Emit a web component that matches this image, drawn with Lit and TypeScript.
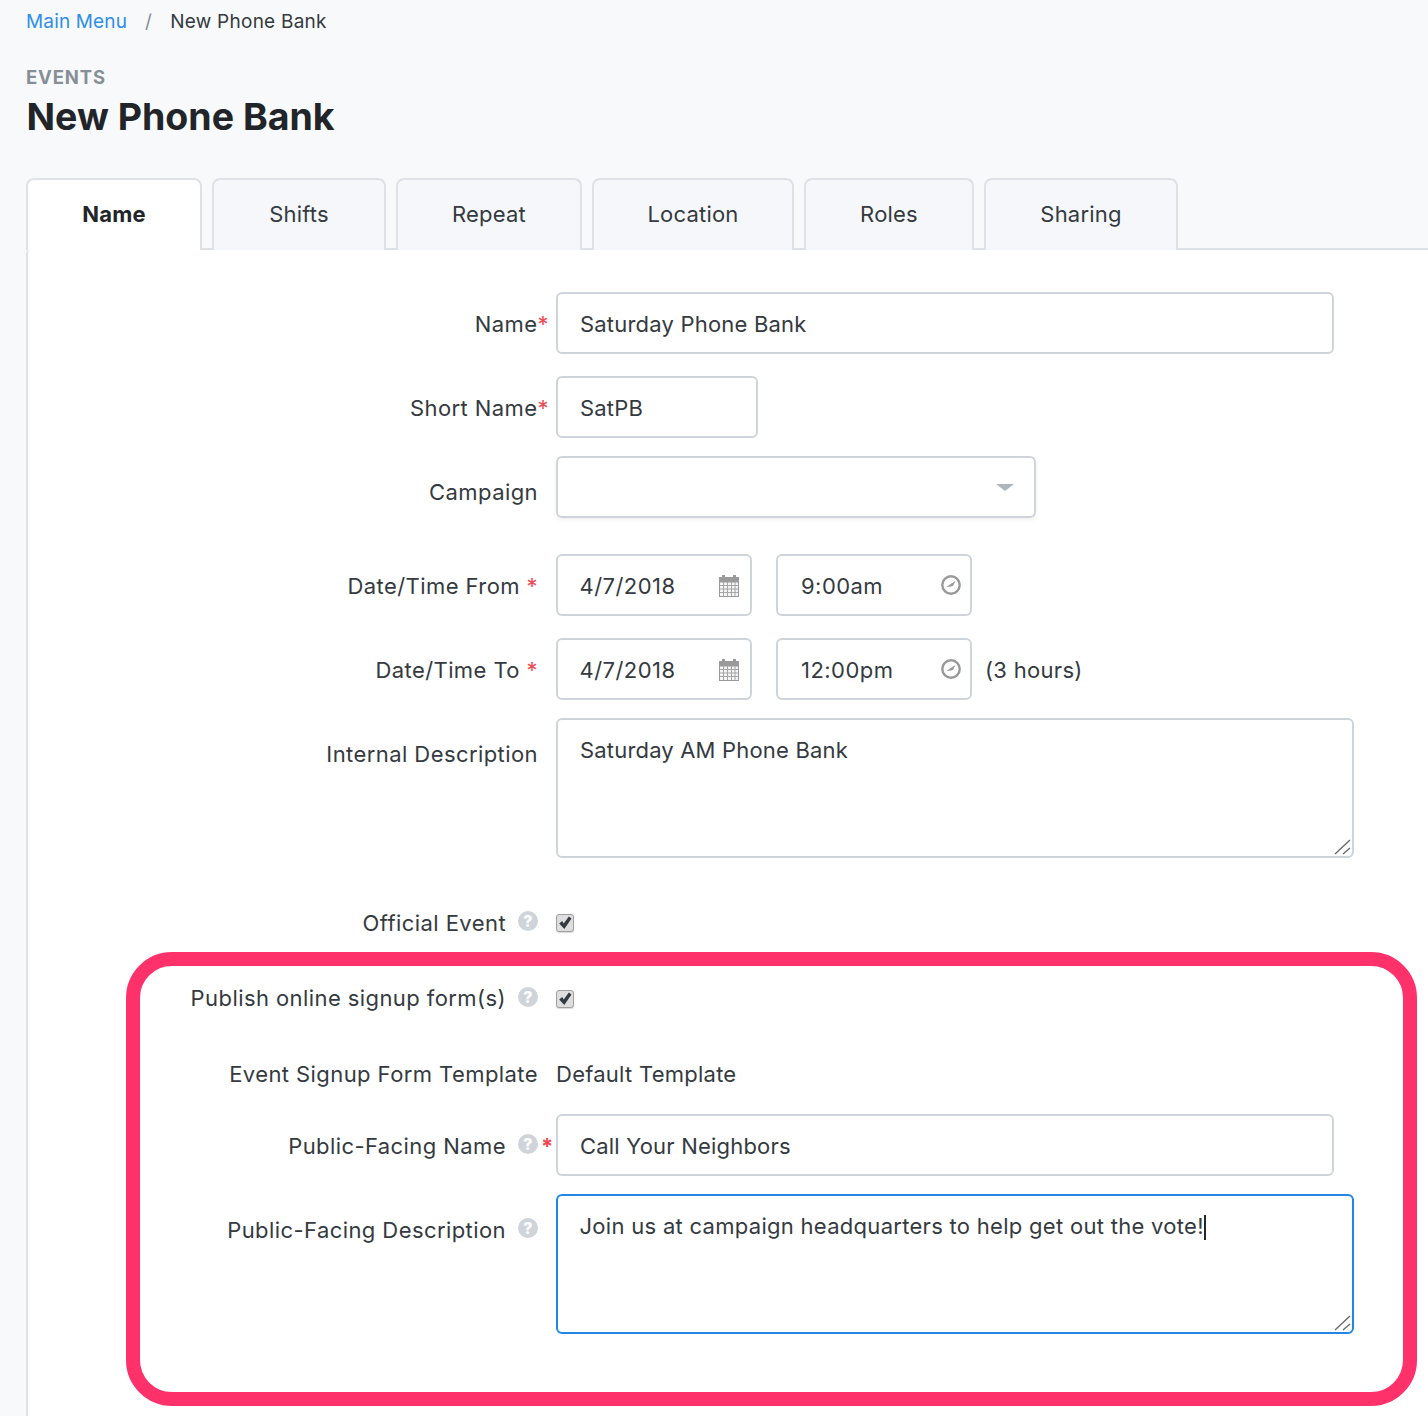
import { LitElement, html, css } from "lit";
import { customElement } from "lit/decorators.js";

const calendar = html`<svg class="ico cal" width="20" height="22" viewBox="0 0 20 22">
  <rect x="3" y="0" width="3" height="4" fill="#9a9a9a"/><rect x="14" y="0" width="3" height="4" fill="#9a9a9a"/>
  <rect x="0" y="2" width="20" height="5" fill="#9a9a9a"/>
  <rect x="0.500" y="7" width="19" height="14.500" fill="#f4f4f4" stroke="#9a9a9a"/>
  <path stroke="#a6a6a6" stroke-width="1" d="M1 10.500h18M1 14h18M1 17.500h18M4.500 7v14M8.500 7v14M12.500 7v14M16 7v14"/>
</svg>`;
const clock = html`<svg class="ico clk" width="20" height="20" viewBox="0 0 20 20">
  <circle cx="10" cy="10" r="8.700" fill="none" stroke="#999" stroke-width="2.400"/>
  <path d="M5.500 12 10 8.800l4.500-2.800-2.500 5-2 .6z" fill="#999"/>
</svg>`;
const help = html`<span class="help">?</span>`;
const check = html`<span class="check"><svg width="14" height="14" viewBox="0 0 14 14">
  <path d="M1.200 7.500 4.200 5l1.600 2.400L10.800 0.500l2.700 2L6.300 13z" fill="#343a40"/>
</svg></span>`;
const grip = html`<svg class="grip" width="18" height="18" viewBox="0 0 18 18">
  <path d="M1 16 16 2M9 16l7-6" stroke="#666" stroke-width="1.300" fill="none"/>
</svg>`;

@customElement("app-root")
export class AppRoot extends LitElement {
  static styles = css`
    :host {
      display: block;
      height: 1416px;
      overflow: hidden;
      background: #f8f9fb;
      font-family: Inter, "Liberation Sans", sans-serif;
      font-size: 22px;
      color: #343a40;
    }
    .crumbs {
      display: flex;
      align-items: center;
      height: 42px;
      padding-left: 26px;
      font-size: 19px;
      letter-spacing: 0.25px;
    }
    .crumbs a { color: #2d8fe8; text-decoration: none; letter-spacing: 0.15px; }
    .crumbs .sep { color: #868e96; margin: 0 18px; }
    .eyebrow {
      margin: 23px 0 0 26px;
      height: 25px;
      line-height: 25px;
      font-size: 18.500px;
      font-weight: 700;
      letter-spacing: 0.85px;
      color: #868e96;
    }
    h1 {
      margin: 2px 0 0 26.500px;
      height: 50px;
      line-height: 50px;
      font-size: 37.500px;
      font-weight: 700;
      color: #212529;
    }
    .tabs {
      display: grid;
      grid-template-columns: 176px 174px 186px 202px 170px 194px 1fr;
      column-gap: 10px;
      margin: 36px 0 0 26px;
      height: 72px;
      box-sizing: border-box;
      border-bottom: 2px solid #dee2e6;
      letter-spacing: 0.2px;
    }
    .tab {
      height: 72px;
      box-sizing: border-box;
      padding-bottom: 2px;
      display: flex;
      align-items: center;
      justify-content: center;
      border: 2px solid #dee2e6;
      border-bottom: 0;
      border-radius: 8px 8px 0 0;
      background: #f6f7fa;
      position: relative;
      z-index: 1;
    }
    .tab.active { background: #fff; font-weight: 700; color: #212529; }
    .panel {
      position: relative;
      margin-left: 26px;
      height: 1166px;
      box-sizing: border-box;
      padding-top: 42px;
      background: #fff;
      border-left: 2px solid #dee2e6;
      border-top-left-radius: 4px;
    }
    .row {
      display: grid;
      grid-template-columns: 528px 1fr;
      align-items: start;
      min-height: 62px;
    }
    .label {
      display: flex;
      justify-content: flex-end;
      align-items: center;
      height: 62px;
      padding-right: 18px;
      white-space: pre;
      letter-spacing: 0.42px;
      padding-top: 1px;
      box-sizing: border-box;
    }
    .tall .label { height: 72px; padding-top: 0; }
    .label.flat { padding-top: 0; }
    .label.up { padding: 0 18px 3px 0; }
    .label.down { padding-top: 9px; }
    .star { color: #f0484f; }
    .star.hang { margin-right: -11px; }
    .star.big { margin-right: -14px; margin-left: 3px; font-weight: 700; width: 11px; }
    .help {
      display: flex;
      align-items: center;
      justify-content: center;
      width: 20px;
      height: 20px;
      margin: 0 0 4px 12px;
      border-radius: 50%;
      background: #ced4da;
      color: #fff;
      font-size: 16px;
      font-weight: 800;
      letter-spacing: 0;
    }
    .up .help { margin-bottom: 1px; }
    .fields { display: flex; align-items: center; }
    .fields.tick { height: 62px; }
    .input {
      position: relative;
      display: flex;
      align-items: center;
      justify-content: space-between;
      height: 62px;
      box-sizing: border-box;
      padding: 1px 10px 0 22px;
      background: #fff;
      border: 2px solid #ced4da;
      border-radius: 6px;
      letter-spacing: 0.2px;
    }
    .w-full { width: 778px; }
    .w-short { width: 202px; }
    .w-select { width: 480px; box-shadow: 0 2px 4px rgba(0,0,0,0.06); padding-right: 20px; justify-content: flex-end; }
    .w-date { width: 196px; letter-spacing: 0.45px; padding-left: 21.500px; }
    .w-date + .w-date { margin-left: 24px; padding-left: 23px; }
    .cal { margin: 0 1px 0 0; }
    .clk { margin: -2px -1px 0 0; }
    .after { margin-left: 13px; letter-spacing: 0.3px; padding-top: 1px; }
    .area {
      position: relative;
      width: 798px;
      height: 140px;
      box-sizing: border-box;
      padding: 17px 22px;
      background: #fff;
      border: 2px solid #ced4da;
      border-radius: 6px;
      line-height: 26px;
      letter-spacing: 0.18px;
    }
    .area.focus { border-color: #2186e5; letter-spacing: 0.29px; padding-left: 21.500px; }
    .caret {
      display: inline-block;
      width: 2px;
      height: 25px;
      vertical-align: -6px;
      background: #212529;
    }
    .grip { position: absolute; right: 0; bottom: 0; }
    .arrow {
      width: 0;
      height: 0;
      border-left: 9px solid transparent;
      border-right: 9px solid transparent;
      border-top: 7px solid #adb5bd;
    }
    .check {
      display: flex;
      align-items: center;
      justify-content: center;
      width: 18px;
      height: 18px;
      box-sizing: border-box;
      border: 1px solid #a0a0a0;
      border-radius: 3px;
      background: #dedede;
      box-shadow: 0 1px 1px rgba(0,0,0,0.15);
    }
    .plain { line-height: 62px; letter-spacing: 0.25px; }
    .m9 { margin-top: 9px; }
    .m13 { margin-top: 13px; }
    .m14 { margin-top: 14px; }
    .m18 { margin-top: 18px; }
    .m22 { margin-top: 22px; }
    .m34 { margin-top: 34px; }
    .m36 { margin-top: 36px; }
    .highlight {
      position: absolute;
      left: 98px;
      top: 702px;
      width: 1291px;
      height: 454px;
      box-sizing: border-box;
      border: 14px solid #ff316b;
      border-radius: 46px;
      pointer-events: none;
    }
  `;

  render() {
    return html`
      <nav class="crumbs"><a href="#">Main Menu</a><span class="sep">/</span><span>New Phone Bank</span></nav>
      <div class="eyebrow">EVENTS</div>
      <h1>New Phone Bank</h1>
      <div class="tabs">
        <div class="tab active">Name</div>
        <div class="tab">Shifts</div>
        <div class="tab">Repeat</div>
        <div class="tab">Location</div>
        <div class="tab">Roles</div>
        <div class="tab">Sharing</div>
      </div>
      <div class="panel">
        <div class="row">
          <div class="label">Name<span class="star hang">*</span></div>
          <div class="fields"><div class="input w-full">Saturday Phone Bank</div></div>
        </div>
        <div class="row m22">
          <div class="label">Short Name<span class="star hang">*</span></div>
          <div class="fields"><div class="input w-short">SatPB</div></div>
        </div>
        <div class="row m18">
          <div class="label down">Campaign</div>
          <div class="fields"><div class="input w-select"><span class="arrow"></span></div></div>
        </div>
        <div class="row m36">
          <div class="label">Date/Time From <span class="star">*</span></div>
          <div class="fields">
            <div class="input w-date">4/7/2018${calendar}</div>
            <div class="input w-date">9:00am${clock}</div>
          </div>
        </div>
        <div class="row m22">
          <div class="label">Date/Time To <span class="star">*</span></div>
          <div class="fields">
            <div class="input w-date">4/7/2018${calendar}</div>
            <div class="input w-date">12:00pm${clock}</div>
            <span class="after">(3 hours)</span>
          </div>
        </div>
        <div class="row tall m18">
          <div class="label">Internal Description</div>
          <div class="area">Saturday AM Phone Bank${grip}</div>
        </div>
        <div class="row m34">
          <div class="label flat">Official Event${help}</div>
          <div class="fields tick">${check}</div>
        </div>
        <div class="row m14">
          <div class="label up">Publish online signup form(s)${help}</div>
          <div class="fields tick">${check}</div>
        </div>
        <div class="row m13">
          <div class="label flat">Event Signup Form Template</div>
          <div class="plain">Default Template</div>
        </div>
        <div class="row m9">
          <div class="label">Public-Facing Name${help}<span class="star big">*</span></div>
          <div class="fields"><div class="input w-full">Call Your Neighbors</div></div>
        </div>
        <div class="row tall m18">
          <div class="label">Public-Facing Description${help}</div>
          <div class="area focus">Join us at campaign headquarters to help get out the vote!<span class="caret"></span>${grip}</div>
        </div>
        <div class="highlight"></div>
      </div>
    `;
  }
}
